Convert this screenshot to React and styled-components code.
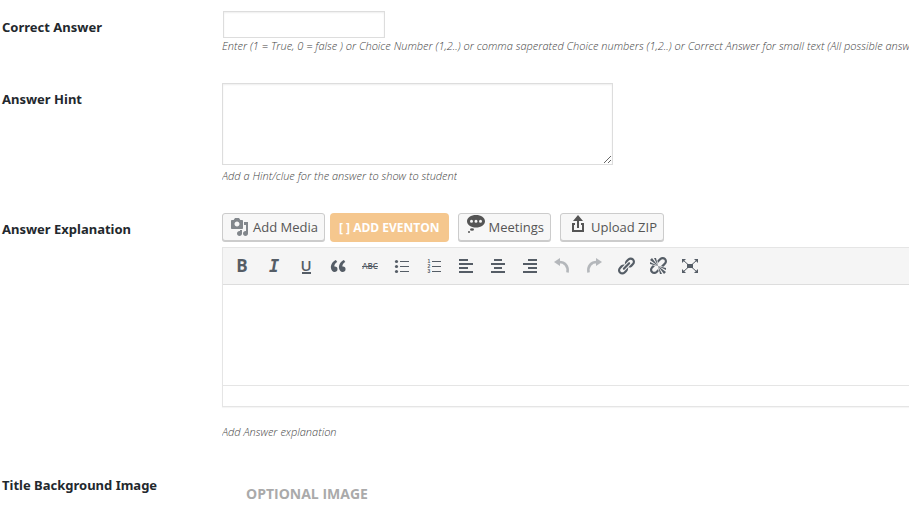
import React from "react";
import styled, { createGlobalStyle } from "styled-components";

const Global = createGlobalStyle`
  * { box-sizing: border-box; }
  body {
    margin: 0;
    background: #fff;
    color: #23282d;
    font-family: "Open Sans", "Noto Sans", sans-serif;
    font-size: 13px;
    overflow: hidden;
  }
`;

const Form = styled.form`
  display: flex;
  flex-direction: column;
  gap: 29px;
  padding: 11px 0 16px 2px;
`;

const Row = styled.div`
  display: grid;
  grid-template-columns: 220px minmax(0, 1fr);
  align-items: start;
`;

const Label = styled.label`
  padding-top: 6px;
  font-family: "Noto Sans", "Open Sans", sans-serif;
  font-size: 13px;
  font-weight: 700;
  line-height: 20px;
`;

const Field = styled.div`
  display: flex;
  flex-direction: column;
  align-items: flex-start;
`;

const TextInput = styled.input`
  width: 162px;
  height: 27px;
  margin: 0 1px;
  padding: 3px 5px;
  border: 1px solid #ddd;
  box-shadow: inset 0 1px 2px rgba(0, 0, 0, 0.07);
  font: inherit;
`;

const TextArea = styled.textarea`
  display: block;
  width: 391px;
  max-width: 100%;
  height: 82px;
  padding: 2px 6px;
  border: 1px solid #ddd;
  box-shadow: inset 0 1px 2px rgba(0, 0, 0, 0.07);
  font: inherit;
  resize: vertical;
`;

const Hint = styled.p`
  max-width: 100%;
  margin: ${(p) => p.$space}px 0 0;
  color: #444;
  font-size: 11px;
  font-style: italic;
  font-weight: 300;
  line-height: 16px;
  white-space: nowrap;
  overflow: hidden;
`;

const MediaBar = styled.div`
  display: flex;
  gap: 9px;
`;

const ButtonPair = styled.div`
  display: flex;
  gap: 5px;
`;

const MediaButton = styled.button`
  display: flex;
  align-items: center;
  gap: 3px;
  height: 28px;
  padding: 0 6px 0 7px;
  border: 1px solid #ccc;
  border-radius: 3px;
  background: #f7f7f7;
  box-shadow: 0 1px 0 #ccc;
  color: #555;
  font: inherit;
  white-space: nowrap;
`;

const EventButton = styled.button`
  height: 29px;
  padding: 0 9px;
  border: 0;
  border-radius: 4px;
  background: #f5c78e;
  color: #fff;
  font: inherit;
  font-size: 12px;
  font-weight: 700;
  white-space: nowrap;
`;

const Editor = styled.div`
  width: 100%;
  margin-top: 5px;
  border: 1px solid #e5e5e5;
  border-right: 0;
  box-shadow: 0 1px 1px rgba(0, 0, 0, 0.04);
`;

const Toolbar = styled.div`
  display: flex;
  align-items: center;
  height: 37px;
  padding-left: 3px;
  border-bottom: 1px solid #ddd;
  background: #f5f5f5;
`;

const Tool = styled.button`
  display: grid;
  place-items: center;
  width: 32px;
  height: 28px;
  padding: 0;
  border: 0;
  background: none;
  color: #555d66;
  opacity: ${(p) => (p.disabled ? 0.4 : 1)};
`;

const EditorBody = styled.textarea`
  display: block;
  width: 100%;
  height: 100px;
  padding: 10px;
  border: 0;
  outline: 0;
  font: inherit;
  resize: none;
`;

const StatusBar = styled.div`
  height: 21px;
  border-top: 1px solid #e5e5e5;
`;

const OptionalImage = styled.span`
  padding: 15px 24px 0;
  color: #aaa;
  font-size: 14px;
  font-weight: 700;
  line-height: 20px;
`;

const Svg = styled.svg`
  display: block;
  flex: none;
  overflow: visible;
  fill: ${(p) => p.$tint || "currentColor"};
`;

const Glyph = styled.text`
  font-family: ${(p) => p.$face || "Open Sans"}, sans-serif;
  font-size: ${(p) => p.$size}px;
  font-weight: ${(p) => p.$weight || 700};
  font-style: ${(p) => (p.$italic ? "italic" : "normal")};
  text-anchor: middle;
`;

const Icon = ({ children, size = 20, tint }) => (
  <Svg width={size} height={size} viewBox="0 0 20 20" $tint={tint} aria-hidden="true">
    {children}
  </Svg>
);

const UndoShape = () => (
  <>
    <path d="M2 6 8 2v8z" />
    <path d="M7 6c6 0 9.500 4 8.500 10.500" fill="none" stroke="currentColor" strokeWidth="2.6" />
  </>
);

const tools = [
  ["Bold", <Glyph x="10" y="16" $size={17}>B</Glyph>],
  ["Italic", <Glyph x="10" y="16" $size={17} $face="DejaVu Sans Mono" $italic>I</Glyph>],
  [
    "Underline",
    <>
      <Glyph x="10" y="15" $size={15} $weight={600}>U</Glyph>
      <path d="M6 16h9v2H6z" />
    </>,
  ],
  [
    "Blockquote",
    <path d="M9.49 13.22c0-.74-.2-1.38-.61-1.9-.62-.78-1.83-.88-2.53-.72-.29-1.65 1.11-3.75 2.92-4.65L7.88 4c-2.73 1.3-5.42 4.28-4.96 8.05C3.21 14.43 4.59 16 6.54 16c.85 0 1.56-.25 2.12-.75s.83-1.18.83-2.03zm8.05 0c0-.74-.2-1.38-.61-1.9-.63-.78-1.83-.88-2.53-.72-.29-1.65 1.11-3.75 2.92-4.65L15.93 4c-2.73 1.3-5.41 4.28-4.95 8.05.29 2.38 1.66 3.95 3.61 3.95.85 0 1.56-.25 2.12-.75s.83-1.18.83-2.03z" />,
  ],
  [
    "Strikethrough",
    <>
      <Glyph x="10" y="13" $size={8} $weight={600}>ABC</Glyph>
      <path d="M2 10h16v1H2z" />
    </>,
  ],
  [
    "Bulleted list",
    <>
      <circle cx="4.5" cy="5.5" r="1.6" />
      <circle cx="4.5" cy="10.5" r="1.6" />
      <circle cx="4.5" cy="15.5" r="1.6" />
      <path d="M8 5h9v1H8zM8 10h9v1H8zM8 15h9v1H8z" />
    </>,
  ],
  [
    "Numbered list",
    <>
      <Glyph x="5" y="7" $size={5} $face="Liberation Sans">1</Glyph>
      <Glyph x="5" y="12" $size={5} $face="Liberation Sans">2</Glyph>
      <Glyph x="5" y="17" $size={5} $face="Liberation Sans">3</Glyph>
      <path d="M8 5h9v1H8zM8 10h9v1H8zM8 15h9v1H8z" />
    </>,
  ],
  ["Align left", <path d="M3 3h9v2H3zM3 7h14v2H3zM3 11h9v2H3zM3 15h14v2H3z" />],
  ["Align center", <path d="M6 3h8v2H6zM3 7h14v2H3zM6 11h8v2H6zM3 15h14v2H3z" />],
  ["Align right", <path d="M8 3h9v2H8zM3 7h14v2H3zM8 11h9v2H8zM3 15h14v2H3z" />],
  ["Undo", <UndoShape />, true],
  [
    "Redo",
    <g transform="matrix(-1 0 0 1 20 0)">
      <UndoShape />
    </g>,
    true,
  ],
  [
    "Insert link",
    <path d="M17.74 2.76c1.68 1.69 1.68 4.41 0 6.1l-1.53 1.52c-1.12 1.12-2.7 1.47-4.14 1.09l2.62-2.61.76-.77.76-.76c.84-.84.84-2.2 0-3.04-.84-.85-2.2-.85-3.04 0l-.77.76-3.38 3.38c-.37-1.44-.02-3.02 1.1-4.14l1.52-1.53c1.69-1.68 4.42-1.68 6.1 0zM8.59 13.43l5.34-5.34c.42-.42.42-1.1 0-1.52-.44-.43-1.13-.39-1.53 0l-5.33 5.34c-.42.42-.42 1.1 0 1.52.44.43 1.13.39 1.52 0zm-.76 2.29l4.14-4.15c.38 1.44.03 3.02-1.09 4.14l-1.52 1.53c-1.69 1.68-4.41 1.68-6.1 0-1.68-1.68-1.68-4.42 0-6.1l1.53-1.52c1.12-1.12 2.7-1.47 4.14-1.1l-4.14 4.15c-.85.84-.85 2.2 0 3.05.84.84 2.2.84 3.04 0z" />,
  ],
  [
    "Remove link",
    <path d="M17.74 2.26c1.68 1.69 1.68 4.41 0 6.1l-1.53 1.52c-.32.33-.69.58-1.08.77L13 10l1.69-1.64.76-.77.76-.76c.84-.84.84-2.2 0-3.04-.84-.85-2.2-.85-3.04 0l-.77.76-.76.76L10 7l-.65-2.14c.19-.38.44-.75.77-1.07l1.52-1.53c1.69-1.68 4.42-1.68 6.1 0zM2 4l8 6-6-8zm4-2l4 8-2-8H6zM2 6l8 4-8-2V6zm7.36 7.69L10 13l.74 2.35-1.38 1.39c-1.69 1.68-4.41 1.68-6.1 0-1.68-1.68-1.68-4.42 0-6.1l1.39-1.38L7 10l-.69.64-1.52 1.53c-.85.84-.85 2.2 0 3.04.84.85 2.2.85 3.04 0zM18 16l-8-6 6 8zm-4 2l-4-8 2 8h2zm4-4l-8-4 8 2v2z" />,
  ],
  [
    "Fullscreen",
    <>
      <path d="M7 8h6v4H7zM2 3h4L2 7zM18 3h-4l4 4zM2 17h4l-4-4zM18 17h-4l4-4z" />
      <path d="m3 4 5 4.500M17 4l-5 4.500M3 16l5-4.500M17 16l-5-4.500" fill="none" stroke="currentColor" />
    </>,
  ],
];

const MediaIcon = () => (
  <Icon tint="#82878c">
    <path d="M13 11V4c0-.55-.45-1-1-1h-1.67L9 1H5L3.67 3H2c-.55 0-1 .45-1 1v7c0 .55.45 1 1 1h10c.55 0 1-.45 1-1zM7 4.500c1.380 0 2.500 1.120 2.500 2.500S8.380 9.500 7 9.500 4.500 8.380 4.500 7 5.620 4.500 7 4.500zM14 5h4v11.500c0 1.380-1.120 2.500-2.500 2.500S13 17.880 13 16.500s1.120-2.500 2.500-2.500c.17 0 .34.02.5.05V8h-2V5zm-4 9.050V13h2v3.500c0 1.380-1.120 2.500-2.500 2.500S7 17.880 7 16.500 8.120 14 9.500 14c.17 0 .34.02.5.05z" />
  </Icon>
);

const MeetingsIcon = () => (
  <Icon>
    <path
      fillRule="evenodd"
      d="M10-2c5 0 9 2.600 9 6.300s-4 6.300-9 6.300S1 8 1 4.300 5-2 10-2zM4 4.300a1.500 1.500 0 1 0 3 0 1.500 1.500 0 0 0-3 0zm4.500 0a1.500 1.500 0 1 0 3 0 1.500 1.500 0 0 0-3 0zm4.500 0a1.500 1.500 0 1 0 3 0 1.500 1.500 0 0 0-3 0z"
    />
    <ellipse cx="6" cy="12.500" rx="2" ry="1.300" />
    <circle cx="3" cy="15" r="1" />
  </Icon>
);

const UploadIcon = () => (
  <Icon>
    <path d="M9 11V4H5l5-6 5 6h-4v7zM4 6h3v2H6v5h8V8h-1V6h3v9H4z" />
  </Icon>
);

export default function App() {
  return (
    <>
      <Global />
      <Form onSubmit={(e) => e.preventDefault()}>
        <Row>
          <Label htmlFor="answer">Correct Answer</Label>
          <Field>
            <TextInput id="answer" type="text" />
            <Hint $space={0}>
              Enter (1 = True, 0 = false ) or Choice Number (1,2..) or comma saperated Choice numbers (1,2..) or
              Correct Answer for small text (All possible answers)
            </Hint>
          </Field>
        </Row>
        <Row>
          <Label htmlFor="hint">Answer Hint</Label>
          <Field>
            <TextArea id="hint" />
            <Hint $space={3}>Add a Hint/clue for the answer to show to student</Hint>
          </Field>
        </Row>
        <Row>
          <Label htmlFor="explanation">Answer Explanation</Label>
          <Field>
            <MediaBar>
              <ButtonPair>
                <MediaButton type="button">
                  <MediaIcon />
                  Add Media
                </MediaButton>
                <EventButton type="button">[ ] ADD EVENTON</EventButton>
              </ButtonPair>
              <MediaButton type="button">
                <MeetingsIcon />
                Meetings
              </MediaButton>
              <MediaButton type="button">
                <UploadIcon />
                Upload ZIP
              </MediaButton>
            </MediaBar>
            <Editor>
              <Toolbar role="toolbar" aria-label="Formatting">
                {tools.map(([name, shape, off]) => (
                  <Tool key={name} type="button" aria-label={name} disabled={off}>
                    <Icon>{shape}</Icon>
                  </Tool>
                ))}
              </Toolbar>
              <EditorBody id="explanation" />
              <StatusBar />
            </Editor>
            <Hint $space={17}>Add Answer explanation</Hint>
          </Field>
        </Row>
        <Row>
          <Label as="span">Title Background Image</Label>
          <Field>
            <OptionalImage>OPTIONAL IMAGE</OptionalImage>
          </Field>
        </Row>
      </Form>
    </>
  );
}
